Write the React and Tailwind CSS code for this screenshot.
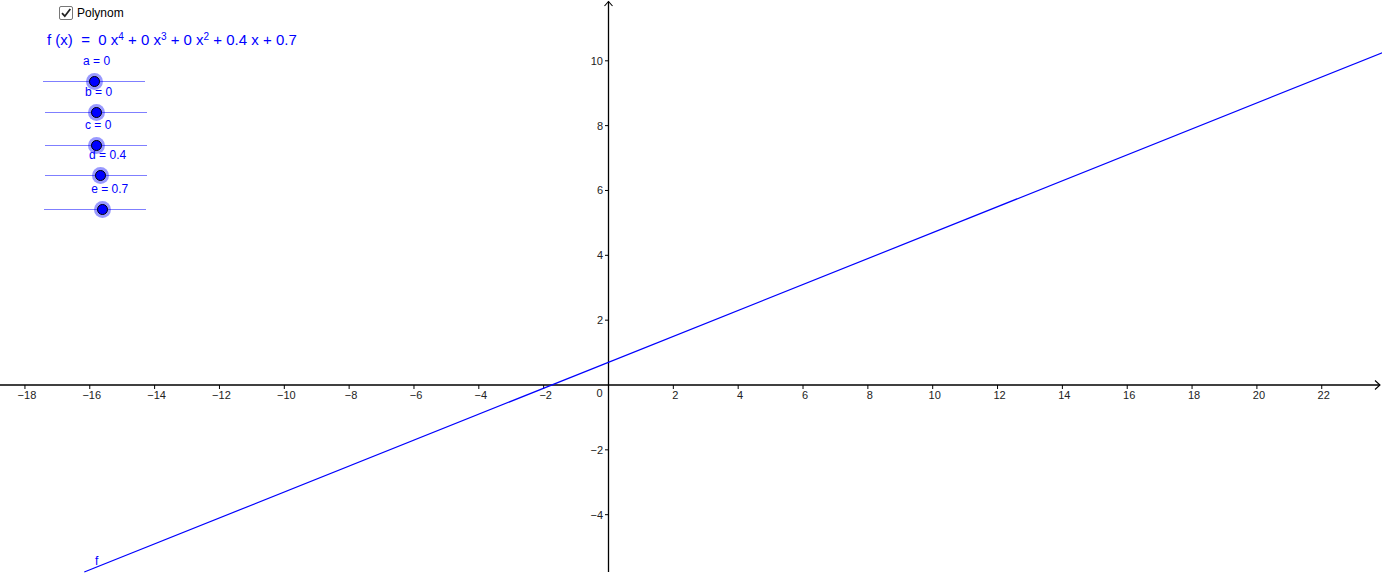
import React from 'react';

const S = 32.42;
const OX = 608.5;
const OY = 385;
const H = 572;
const px = (x) => OX + x * S;
const py = (y) => OY - y * S;

const xTicks = [-18, -16, -14, -12, -10, -8, -6, -4, -2, 2, 4, 6, 8, 10, 12, 14, 16, 18, 20, 22];
const yTicks = [10, 8, 6, 4, 2, -2, -4];

const fmt = (n) => (n < 0 ? '\u2212' + Math.abs(n) : String(n));

const sliders = [
  { name: 'a', value: 0, cls: 'ml-[43px] mt-0' },
  { name: 'b', value: 0, cls: 'ml-[45px] mt-[3px]' },
  { name: 'c', value: 0, cls: 'ml-[45px] mt-[5px]' },
  { name: 'd', value: 0.4, cls: 'ml-[45px] mt-[2px]' },
  { name: 'e', value: 0.7, cls: 'ml-[44px] mt-[6px]' },
];

function Slider({ name, value, cls }) {
  // range -5..5 across the 102px track
  const knob = ((value + 5) / 10) * 102;
  return (
    <div className={'relative w-[102px] h-[28px] flex flex-col ' + cls}>
      <div className="text-[12px] leading-[14px] h-[14px] whitespace-nowrap text-[#0000ff]" style={{ marginLeft: knob - 11 }}>
        {name} = {value}
      </div>
      <div className="mt-[13px] h-px bg-[#7f7fff]" />
      <div
        className="absolute top-[19px] w-[17px] h-[17px] rounded-full bg-[#0000ff]/40 flex items-center justify-center"
        style={{ left: knob - 8.5 }}
      >
        <div className="w-[11px] h-[11px] rounded-full bg-[#0000ff] border border-black" />
      </div>
    </div>
  );
}

function Graph() {
  const x0 = (-(H - OY) / S - 0.7) / 0.4;
  return (
    <svg width="1382" height="574" className="absolute inset-0" style={{ fontFamily: '"Liberation Sans", Arial, sans-serif' }}>
      {/* x axis */}
      <line x1="0" y1={OY} x2="1380" y2={OY} stroke="#000" strokeWidth="1.3" />
      <polyline points={`1375,${OY - 4.5} 1380,${OY} 1375,${OY + 4.5}`} fill="none" stroke="#000" strokeWidth="1.1" />
      {/* y axis */}
      <line x1={OX} y1="1.5" x2={OX} y2={H} stroke="#000" strokeWidth="1.3" />
      <polyline points={`${OX - 4},6 ${OX},1.5 ${OX + 4},6`} fill="none" stroke="#000" strokeWidth="1.1" />

      {xTicks.map((t) => (
        <g key={'x' + t}>
          <line x1={px(t)} y1={OY} x2={px(t)} y2={OY + 4} stroke="#000" strokeWidth="1" />
          <text x={px(t) + 2} y={OY + 14} fontSize="11" fill="#222" textAnchor="middle">
            {fmt(t)}
          </text>
        </g>
      ))}
      <text x="599.5" y={OY + 12} fontSize="11" fill="#222" textAnchor="middle">0</text>

      {yTicks.map((t) => (
        <g key={'y' + t}>
          <line x1={OX - 3.5} y1={py(t)} x2={OX} y2={py(t)} stroke="#000" strokeWidth="1" />
          <text x="603" y={py(t) + 4} fontSize="11" fill="#222" textAnchor="end">
            {fmt(t)}
          </text>
        </g>
      ))}

      {/* f(x) = 0.4x + 0.7 */}
      <line x1={px(x0)} y1={H} x2={px(25)} y2={py(25 * 0.4 + 0.7)} stroke="#0000ff" strokeWidth="1.2" />
      <text x="95" y="565" fontSize="12" fill="#0000ff">f</text>
    </svg>
  );
}

export default function App() {
  return (
    <div className="relative w-[1382px] h-[574px] bg-white overflow-hidden font-['Liberation_Sans',Arial,sans-serif]">
      <Graph />
      <div className="absolute left-0 top-0 flex flex-col">
        <label className="flex items-center gap-[4px] ml-[59px] mt-[6px] h-[14px]">
          <span className="w-[14px] h-[14px] border border-[#777] rounded-[2px] bg-white flex items-center justify-center">
            <svg width="12" height="12" viewBox="0 0 12 12">
              <path d="M2 6.2 L4.8 9.2 L10.3 2" fill="none" stroke="#222" strokeWidth="1.8" />
            </svg>
          </span>
          <span className="text-[12px] leading-[14px] text-black">Polynom</span>
        </label>
        <div className="ml-[47px] mt-[11px] text-[15px] leading-[18px] text-[#0000ff] whitespace-nowrap">
          f (x) &nbsp;= &nbsp;0 x<sup className="text-[10px]">4</sup> + 0 x<sup className="text-[10px]">3</sup> + 0 x<sup className="text-[10px]">2</sup> + 0.4 x + 0.7
        </div>
        <div className="mt-[5px] flex flex-col">
          {sliders.map((s) => (
            <Slider key={s.name} {...s} />
          ))}
        </div>
      </div>
    </div>
  );
}
